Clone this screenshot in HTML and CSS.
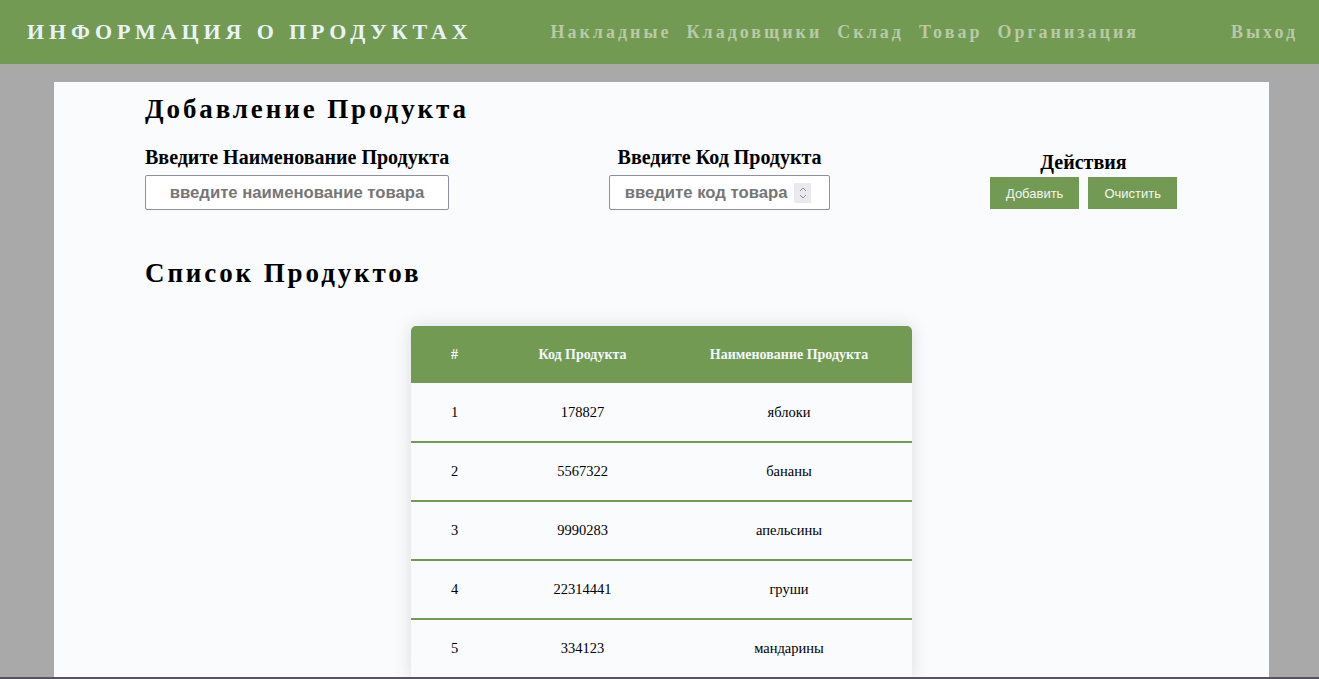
FILE: index.html
```html
<!DOCTYPE html>
<html lang="ru">
<head>
<meta charset="utf-8">
<title>Информация о продуктах</title>
<link rel="stylesheet" href="styles.css">
</head>
<body>
<div class="page">
  <header class="topbar">
    <div class="brand">ИНФОРМАЦИЯ О ПРОДУКТАХ</div>
    <nav class="nav">
      <a href="#">Накладные</a>
      <a href="#">Кладовщики</a>
      <a href="#">Склад</a>
      <a href="#">Товар</a>
      <a href="#">Организация</a>
    </nav>
    <a class="logout" href="#">Выход</a>
  </header>
  <main class="card">
    <h1 class="title">Добавление Продукта</h1>
    <div class="form-row">
      <div class="field field-left">
        <label class="label">Введите Наименование Продукта</label>
        <input class="input input-name" type="text" placeholder="введите наименование товара">
      </div>
      <div class="field">
        <label class="label">Введите Код Продукта</label>
        <div class="input number-box">
          <input class="number-input" type="text" placeholder="введите код товара">
          <span class="spinner">
            <svg width="10" height="16" viewBox="0 0 10 16"><path d="M2 6 L5 3 L8 6" fill="none" stroke="#8a8a90" stroke-width="1"/><path d="M2 10 L5 13 L8 10" fill="none" stroke="#8a8a90" stroke-width="1"/></svg>
          </span>
        </div>
      </div>
      <div class="field actions">
        <div class="label">Действия</div>
        <div class="buttons">
          <button class="btn">Добавить</button>
          <button class="btn">Очистить</button>
        </div>
      </div>
    </div>
    <h2 class="title title-list">Список Продуктов</h2>
    <div class="table-wrap">
      <table class="table">
        <thead>
          <tr><th class="c1">#</th><th class="c2">Код Продукта</th><th class="c3">Наименование Продукта</th></tr>
        </thead>
        <tbody>
          <tr><td>1</td><td>178827</td><td>яблоки</td></tr>
          <tr><td>2</td><td>5567322</td><td>бананы</td></tr>
          <tr><td>3</td><td>9990283</td><td>апельсины</td></tr>
          <tr><td>4</td><td>22314441</td><td>груши</td></tr>
          <tr><td>5</td><td>334123</td><td>мандарины</td></tr>
        </tbody>
      </table>
    </div>
  </main>
</div>
</body>
</html>
```
FILE: styles.css
```css
* { box-sizing: border-box; }
html, body { margin: 0; padding: 0; }
body {
  background: #a9a9a9;
  font-family: "Liberation Serif", "Times New Roman", serif;
  color: #000;
}
.page {
  height: 679px;
  overflow: hidden;
  border-bottom: 2px solid #575360;
}
.topbar {
  height: 64px;
  background: #739a52;
  display: flex;
  align-items: center;
  padding: 0 21px 0 27px;
}
.brand {
  color: #eaf2f8;
  font-weight: bold;
  font-size: 22px;
  letter-spacing: 4.9px;
}
.nav {
  display: flex;
  gap: 15px;
  margin-left: 78px;
}
.nav a, .logout {
  color: #b9c9a9;
  text-decoration: none;
  font-weight: bold;
  font-size: 18px;
  letter-spacing: 3px;
}
.logout { margin-left: auto; }
.card {
  margin: 18px 50px 0 54px;
  height: 700px;
  background: #f9fbfd;
  padding: 12px 92px 0 91px;
}
.title {
  margin: 0;
  font-size: 27px;
  font-weight: bold;
  letter-spacing: 2.9px;
  line-height: 30px;
}
.form-row {
  display: flex;
  justify-content: space-between;
  align-items: flex-end;
  margin-top: 23px;
}
.field {
  display: flex;
  flex-direction: column;
  align-items: center;
}
.field-left { align-items: flex-start; }
.label {
  font-size: 20px;
  font-weight: bold;
  line-height: 20px;
  margin-bottom: 8px;
}
.input {
  height: 35px;
  border: 1px solid #8f8f9d;
  border-radius: 2px;
  background: #fff;
}
.input-name {
  width: 304px;
  font-family: "Liberation Sans", Arial, sans-serif;
  font-weight: bold;
  font-size: 16.7px;
  text-align: center;
  padding: 0 6px;
}
.input-name::placeholder, .number-input::placeholder { color: #767676; opacity: 1; }
.number-box {
  width: 221px;
  display: flex;
  align-items: center;
  padding: 0 18px 0 8px;
}
.number-input {
  flex: 1;
  min-width: 0;
  border: 0;
  outline: 0;
  background: transparent;
  font-family: "Liberation Sans", Arial, sans-serif;
  font-weight: bold;
  font-size: 16.7px;
  text-align: center;
  padding: 0;
}
.spinner {
  width: 17px;
  height: 20px;
  background: #e9e9ee;
  display: flex;
  align-items: center;
  justify-content: center;
}
.actions .label { margin-bottom: 5px; }
.buttons {
  display: flex;
  gap: 9px;
  margin-bottom: 1px;
}
.btn {
  height: 32px;
  border: 0;
  background: #739a52;
  color: #f4f6f2;
  font-family: "Liberation Sans", Arial, sans-serif;
  font-size: 13px;
  padding: 0 16px;
}
.title-list { margin-top: 48px; }
.table-wrap {
  display: flex;
  justify-content: center;
  margin-top: 38px;
}
.table {
  width: 501px;
  border-collapse: collapse;
  border-radius: 5px 5px 0 0;
  overflow: hidden;
  box-shadow: 0 0 18px rgba(0, 0, 0, 0.13);
  background: #f9fbfd;
}
.table th {
  background: #739a52;
  color: #f2f7fb;
  font-size: 14px;
  font-weight: bold;
  height: 57px;
  padding: 0;
}
.c1 { width: 88px; }
.c2 { width: 168px; }
.c3 { width: 245px; }
.table td {
  height: 59px;
  text-align: center;
  font-size: 14.5px;
  border-bottom: 2px solid #739a52;
  padding: 0;
}
```
